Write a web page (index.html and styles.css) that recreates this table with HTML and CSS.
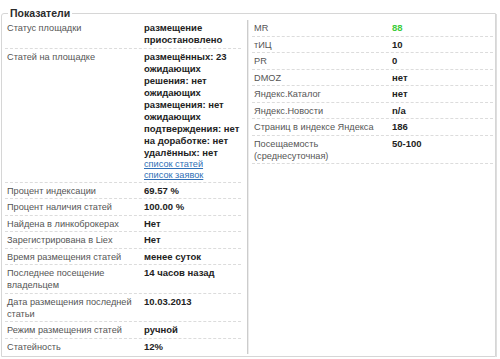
FILE: index.html
```html
<!DOCTYPE html>
<html lang="ru">
<head>
<meta charset="utf-8">
<title>Показатели</title>
<link rel="stylesheet" href="styles.css">
</head>
<body>
<section class="panel">
  <h2 class="panel-title">Показатели</h2>
  <div class="cols">
    <div class="stats stats-left">
      <div class="row"><div class="label">Статус площадки</div><div class="value">размещение приостановлено</div></div>
      <div class="row"><div class="label">Статей на площадке</div><div class="value">размещённых:&nbsp;23<br>ожидающих решения:&nbsp;нет<br>ожидающих размещения:&nbsp;нет<br>ожидающих подтверждения:&nbsp;нет<br>на&nbsp;доработке:&nbsp;нет<br>удалённых:&nbsp;нет<div class="links"><a class="link" href="#">список статей</a><br><a class="link" href="#">список заявок</a></div></div></div>
      <div class="row"><div class="label">Процент индексации</div><div class="value">69.57 %</div></div>
      <div class="row"><div class="label">Процент наличия статей</div><div class="value">100.00 %</div></div>
      <div class="row"><div class="label">Найдена в линкоброкерах</div><div class="value">Нет</div></div>
      <div class="row"><div class="label">Зарегистрирована в Liex</div><div class="value">Нет</div></div>
      <div class="row"><div class="label">Время размещения статей</div><div class="value">менее суток</div></div>
      <div class="row"><div class="label">Последнее посещение владельцем</div><div class="value">14 часов назад</div></div>
      <div class="row"><div class="label">Дата размещения последней статьи</div><div class="value">10.03.2013</div></div>
      <div class="row"><div class="label">Режим размещения статей</div><div class="value">ручной</div></div>
      <div class="row last"><div class="label">Статейность</div><div class="value">12%</div></div>
    </div>
    <div class="divider"></div>
    <div class="stats stats-right">
      <div class="row"><div class="label">MR</div><div class="value good">88</div></div>
      <div class="row"><div class="label">тИЦ</div><div class="value">10</div></div>
      <div class="row"><div class="label">PR</div><div class="value">0</div></div>
      <div class="row"><div class="label">DMOZ</div><div class="value">нет</div></div>
      <div class="row"><div class="label">Яндекс.Каталог</div><div class="value">нет</div></div>
      <div class="row"><div class="label">Яндекс.Новости</div><div class="value">n/a</div></div>
      <div class="row"><div class="label">Страниц в индексе Яндекса</div><div class="value">186</div></div>
      <div class="row"><div class="label">Посещаемость (среднесуточная)</div><div class="value">50-100</div></div>
    </div>
  </div>
</section>
</body>
</html>
```

FILE: styles.css
```css
html, body {
  margin: 0;
  padding: 0;
  background: #ffffff;
}

body {
  font-family: "Liberation Sans", Arial, sans-serif;
  font-size: 9.2px;
  line-height: 12px;
  color: #555555;
}

.panel {
  position: relative;
  box-sizing: border-box;
  width: 495px;
  margin: 13px 0 0 1px;
  padding: 6px 2px 1.5px 3px;
  border: 1px solid #d6d6d6;
  border-radius: 3px 0 0 0;
  box-shadow: 1px 1px 0 #dedede;
}

.panel-title {
  position: absolute;
  top: -7px;
  left: 6px;
  margin: 0;
  padding: 0 2px;
  background: #ffffff;
  font-size: 10.5px;
  line-height: 12px;
  font-weight: bold;
  color: #2b2b2b;
}

.cols {
  display: flex;
  align-items: stretch;
}

.stats-left {
  flex: 0 0 236px;
}

.stats-right {
  flex: 0 0 241px;
  align-self: flex-start;
}

.divider {
  flex: 0 0 1px;
  margin: 0 4px 0 6px;
  background: #cccccc;
  box-shadow: 1px 0 0 #ececec;
}

.row {
  display: grid;
  grid-template-columns: 137px 1fr;
  border-bottom: 1px dashed #dcdcdc;
}

.stats-right .row {
  grid-template-columns: 138px 1fr;
}

.row.last {
  border-bottom: none;
}

.label,
.value {
  padding: 2px 0 1.5px 2px;
}

.label {
  color: #555555;
}

.value {
  font-size: 9.5px;
  font-weight: bold;
  color: #222222;
}

.value.good {
  color: #3ccc3c;
}

.links {
  line-height: 10.5px;
  padding-top: 0.5px;
}

.link {
  font-size: 9.2px;
  font-weight: normal;
  color: #2f6fb6;
  text-decoration: underline;
}
```
